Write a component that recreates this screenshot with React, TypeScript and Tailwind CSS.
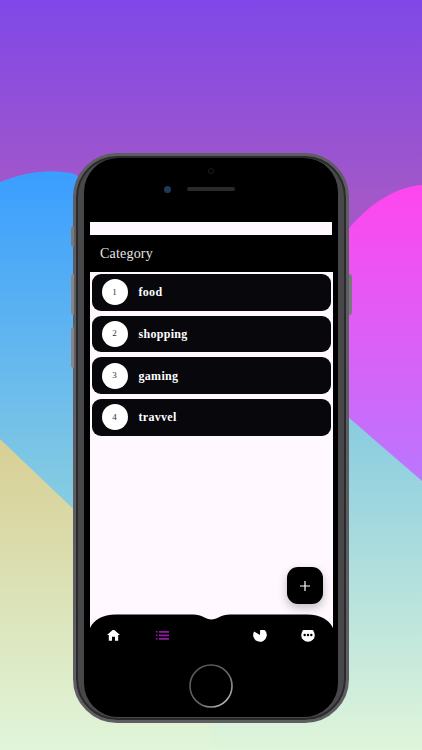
const rows = [
  { n: 1, label: 'food' },
  { n: 2, label: 'shopping' },
  { n: 3, label: 'gaming' },
  { n: 4, label: 'travvel' },
];

const serif = "font-['Liberation_Serif',serif]";

function Backdrop() {
  return (
    <svg className="absolute inset-0" width="422" height="750" viewBox="0 0 422 750">
      <defs>
        <linearGradient id="top" x1="0" y1="0" x2="0" y2="1">
          <stop offset="0" stopColor="#8048e8" />
          <stop offset="1" stopColor="#a458c8" />
        </linearGradient>
        <linearGradient id="blue" x1="0" y1="0" x2="0" y2="1">
          <stop offset="0" stopColor="#3a9eff" />
          <stop offset="1" stopColor="#94d4dc" />
        </linearGradient>
        <linearGradient id="pink" x1="0" y1="0" x2="0" y2="1">
          <stop offset="0" stopColor="#ff46ee" />
          <stop offset="1" stopColor="#b878ff" />
        </linearGradient>
        <linearGradient id="yellow" x1="0" y1="0" x2="0" y2="1">
          <stop offset="0" stopColor="#d8cf94" />
          <stop offset="1" stopColor="#e0f5da" />
        </linearGradient>
        <linearGradient id="teal" x1="0" y1="0" x2="0" y2="1">
          <stop offset="0" stopColor="#85cbe0" />
          <stop offset="1" stopColor="#e0f5da" />
        </linearGradient>
      </defs>
      <rect width="422" height="205" fill="url(#top)" />
      <rect y="205" width="422" height="545" fill="#a458c8" />
      <path d="M0 182 C25 172 50 168 75 174 L211 300 L211 560 L0 560 Z" fill="url(#blue)" />
      <path d="M211 300 L340 240 C365 205 395 187 422 185 L422 490 L211 490 Z" fill="url(#pink)" />
      <path d="M211 410 L340 410 L422 481 L422 750 L211 750 Z" fill="url(#teal)" />
      <path d="M0 439 L90 525 L211 640 L211 750 L0 750 Z" fill="url(#yellow)" />
    </svg>
  );
}

function SideButtons() {
  return (
    <>
      <div className="absolute left-[-5px] top-[70px] h-[21px] w-[3px] rounded-l-sm bg-[#77777c]" />
      <div className="absolute left-[-5px] top-[118px] h-[41px] w-[3px] rounded-l-sm bg-[#85858a]" />
      <div className="absolute left-[-5px] top-[171px] h-[41px] w-[3px] rounded-l-sm bg-[#85858a]" />
      <div className="absolute right-[-6px] top-[118px] h-[41px] w-[3px] rounded-r-sm bg-[#77777c]" />
    </>
  );
}

function NavShape() {
  return (
    <svg className="absolute left-0 top-[-14px]" width="243" height="16" viewBox="0 0 243 16">
      <path
        d="M0 14 C4 6 12 0.500 26 0.500 L103 0.500 C112 0.500 116 5.500 121.500 5.500 C127 5.500 131 0.500 140 0.500 L217 0.500 C231 0.500 239 6 243 14 L243 16 L0 16 Z"
        fill="#000"
      />
    </svg>
  );
}

function ListIcon() {
  return (
    <svg width="13" height="9" viewBox="0 0 13 9" fill="#8e1a9e">
      <rect x="0" y="0" width="1.600" height="1.600" />
      <rect x="0" y="3.500" width="1.600" height="1.600" />
      <rect x="0" y="7" width="1.600" height="1.600" />
      <rect x="3" y="0" width="10" height="1.800" />
      <rect x="3" y="3.500" width="10" height="1.800" />
      <rect x="3" y="7" width="10" height="1.800" />
    </svg>
  );
}

function HomeIcon() {
  return (
    <svg width="13" height="12" viewBox="0 0 13 12" fill="#fff">
      <path d="M6.500 0.300 L13 6 L11.200 6 L11.200 11.700 L8 11.700 L8 7.800 L5 7.800 L5 11.700 L1.800 11.700 L1.800 6 L0 6 Z" />
    </svg>
  );
}

function PieIcon() {
  return (
    <svg width="14" height="14" viewBox="0 0 14 14" fill="#fff">
      <path d="M7 7 L7.200 0.200 A6.800 6.800 0 1 1 1.100 3.600 Z" />
    </svg>
  );
}

function MoreIcon() {
  return (
    <svg width="14" height="14" viewBox="0 0 14 14">
      <circle cx="7" cy="7" r="6.800" fill="#fff" />
      <circle cx="3.700" cy="7" r="1.200" fill="#000" />
      <circle cx="7" cy="7" r="1.200" fill="#000" />
      <circle cx="10.300" cy="7" r="1.200" fill="#000" />
    </svg>
  );
}

function HomeButton() {
  return (
    <svg width="44" height="44" viewBox="0 0 44 44" fill="none">
      <defs>
        <linearGradient id="ring" x1="0" y1="0" x2="1" y2="1">
          <stop offset="0" stopColor="#555" />
          <stop offset="0.6" stopColor="#666" />
          <stop offset="1" stopColor="#d8d8d8" />
        </linearGradient>
      </defs>
      <circle cx="22" cy="22" r="21" stroke="url(#ring)" strokeWidth="1.600" />
    </svg>
  );
}

export default function App() {
  return (
    <div className="relative h-[750px] w-[422px] overflow-hidden">
      <Backdrop />
      <div className="relative ml-[73px] mt-[153px] h-[570px] w-[276px] rounded-[44px] border-[3px] border-[#5e5e62] bg-[#48484b] px-[8px] pb-[3px] pt-[2px] shadow-[inset_0_0_0_2px_#2a2a2c]">
        <SideButtons />
        <div className="flex h-full flex-col overflow-hidden rounded-[34px] bg-black">
          {/* earpiece */}
          <div className="relative h-[64px] shrink-0">
            <div className="absolute left-[124px] top-[10px] h-[6px] w-[6px] rounded-full border border-[#1c1c1e]" />
            <div className="absolute left-[80px] top-[28px] h-[7px] w-[7px] rounded-full bg-[#1d3a5c]" />
            <div className="absolute left-[103px] top-[29px] h-[4px] w-[48px] rounded-full bg-[#2a2a2c]" />
          </div>
          <div className="mx-[6px] h-[13px] shrink-0 bg-[#fff9ff]" />
          <div className={`mx-[6px] flex h-[37px] shrink-0 items-center pl-[10px] text-[14px] tracking-[0.2px] text-[#e6e6e6] ${serif}`}>
            Category
          </div>
          <div className="relative mx-[5.500px] flex h-[356px] shrink-0 flex-col gap-[5px] bg-[#fff9ff] p-[2px]">
            {rows.map((row) => (
              <div key={row.n} className="flex h-[36.700px] items-center rounded-[9px] bg-[#07070c] pl-[10px]">
                <div className={`flex h-[26px] w-[26px] items-center justify-center rounded-full bg-white text-[9px] text-[#333] ${serif}`}>
                  {row.n}
                </div>
                <span className={`ml-[11px] text-[12px] font-bold tracking-[0.3px] text-white ${serif}`}>{row.label}</span>
              </div>
            ))}
            <div className="absolute bottom-[24px] right-[10px] flex h-[37px] w-[36px] items-center justify-center rounded-[11px] bg-black shadow-[0_4px_10px_rgba(0,0,0,0.25)]">
              <svg width="10" height="10" viewBox="0 0 10 10" stroke="#fff" strokeWidth="1.200">
                <path d="M5 0 V10 M0 5 H10" />
              </svg>
            </div>
          </div>
          <div className="relative mx-[5.500px] flex grow flex-col items-center">
            <NavShape />
            <div className="grid h-[14px] w-full grid-cols-5 place-items-center">
              <HomeIcon />
              <ListIcon />
              <div />
              <PieIcon />
              <MoreIcon />
            </div>
            <div className="mt-[22px]">
              <HomeButton />
            </div>
          </div>
        </div>
      </div>
    </div>
  );
}
